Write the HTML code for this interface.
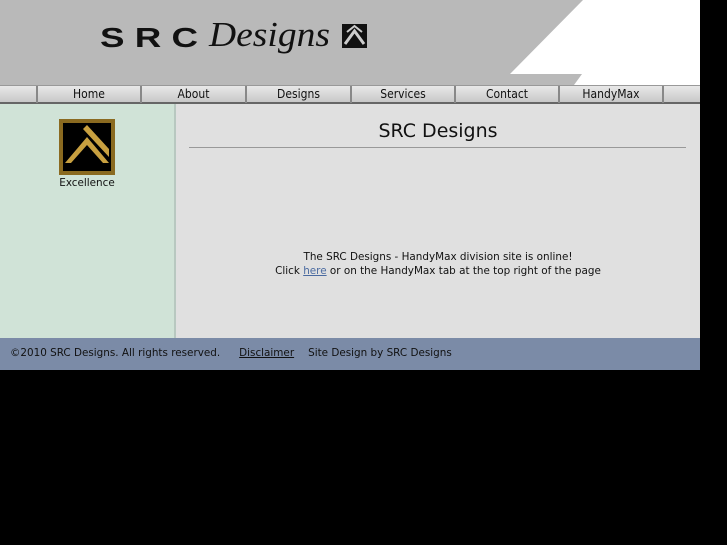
<!DOCTYPE html>
<html><head><meta charset="utf-8"><style>
body{margin:0;background:#000;width:727px;height:545px;overflow:hidden;font-family:"DejaVu Sans","Liberation Sans",sans-serif;font-size:10.4px;color:#111}
#w{position:absolute;left:0;top:0;width:700px;height:370px}
#hd{position:absolute;left:0;top:0;width:700px;height:85px;background:#b9b9b9}
#nav{position:absolute;left:0;top:85px;width:700px;height:19px;background:linear-gradient(#e8e8e8,#c8c8c8);border-top:1px solid #999;border-bottom:2px solid #666;box-sizing:border-box}
.t{position:absolute;top:0;height:17px;line-height:17px;text-align:center;border-left:2px solid #888;font-size:12px;font-family:"DejaVu Sans Condensed","DejaVu Sans",sans-serif}
#sb{position:absolute;left:0;top:104px;width:174px;height:234px;background:#d0e3d7;border-right:2px solid #b8c8c0}
#mn{position:absolute;left:176px;top:104px;width:524px;height:234px;background:#e0e0e0}
#ft{position:absolute;left:0;top:338px;width:700px;height:32px;background:#7b8ba7;line-height:31px}
</style></head><body><div id="w">
<div id="hd">
<svg width="700" height="85" style="position:absolute;left:0;top:0">
<polygon points="583,0 700,0 700,85 574,85 582,74 510,74" fill="#fff"/>
<text x="100" y="47" font-family="Liberation Sans" font-weight="bold" font-size="28" textLength="98" lengthAdjust="spacingAndGlyphs" fill="#111">S R C</text>
<text x="209" y="46" font-family="Liberation Serif" font-style="italic" font-size="35" textLength="121" lengthAdjust="spacingAndGlyphs" fill="#111">Designs</text>
<rect x="342" y="24" width="25" height="24" fill="#111"/>
<polyline points="345,44 354.5,31 364,44" fill="none" stroke="#ccc" stroke-width="3"/>
<polyline points="347,32 354.5,26 362,32" fill="none" stroke="#ccc" stroke-width="2"/>
</svg></div>
<div id="nav">
<div class="t" style="left:36px;width:102px">Home</div>
<div class="t" style="left:140px;width:103px">About</div>
<div class="t" style="left:245px;width:103px">Designs</div>
<div class="t" style="left:350px;width:102px">Services</div>
<div class="t" style="left:454px;width:102px">Contact</div>
<div class="t" style="left:558px;width:102px">HandyMax</div>
<div class="t" style="left:662px;width:36px"></div>
</div>
<div id="sb">
<svg width="56" height="56" style="position:absolute;left:59px;top:15px">
<rect width="56" height="56" fill="#8a6a20"/><rect x="4" y="4" width="48" height="48" fill="#000"/>
<polygon points="6,44 28,18 50,44 44,44 28,26 12,44" fill="#c8a040"/>
<polygon points="24,10 28,6 50,30 50,38" fill="#c8a040"/>
</svg>
<div style="position:absolute;left:0;width:174px;top:73px;text-align:center">Excellence</div>
</div>
<div id="mn">
<div style="position:absolute;left:0;width:524px;top:16px;text-align:center;font-size:19px">SRC Designs</div>
<div style="position:absolute;left:13px;width:497px;top:43px;border-top:1px solid #999"></div>
<div style="position:absolute;left:0;width:524px;top:146px;text-align:center;line-height:14px">The SRC Designs - HandyMax division site is online!<br>Click <u style="color:#4a6aa0">here</u> or on the HandyMax tab at the top right of the page</div>
</div>
<div id="ft"><span style="margin-left:10px">©2010 SRC Designs. All rights reserved.</span><u style="margin-left:19px">Disclaimer</u><span style="margin-left:14px">Site Design by SRC Designs</span></div>
</div></body></html>
